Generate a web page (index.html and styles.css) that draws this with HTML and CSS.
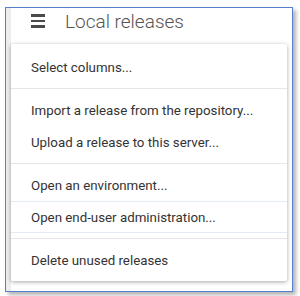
FILE: index.html
```html
<!DOCTYPE html>
<html>
<head>
<meta charset="utf-8">
<link rel="stylesheet" href="styles.css">
</head>
<body>
<div class="frame">
  <header class="header">
    <span class="burger"><span></span><span></span><span></span></span>
    <h1 class="title">Local releases</h1>
  </header>
  <div class="menu">
    <div class="group">
      <div class="item">Select columns...</div>
    </div>
    <div class="group">
      <div class="item">Import a release from the repository...</div>
      <div class="item">Upload a release to this server...</div>
    </div>
    <div class="group">
      <div class="item">Open an environment...</div>
      <div class="item focus">Open end-user administration...</div>
    </div>
    <div class="group">
      <div class="item">Delete unused releases</div>
    </div>
  </div>
</div>
</body>
</html>
```
FILE: styles.css
```css
html, body {
  margin: 0;
  padding: 0;
  background: #fff;
}
body {
  font-family: Roboto, "Liberation Sans", sans-serif;
  width: 300px;
  height: 296px;
  overflow: hidden;
}
.frame {
  box-sizing: border-box;
  margin: 7px 0 0 5px;
  width: 288px;
  height: 285px;
  border: 1px solid #5580d0;
  background: linear-gradient(to right, #ededed 5px, #fff 5px);
  box-shadow: 3px 3px 4px rgba(0, 0, 0, 0.3);
  display: flex;
  flex-direction: column;
}
.header {
  box-sizing: border-box;
  height: 36px;
  padding: 0 0 10px 25px;
  display: flex;
  align-items: center;
}
.burger {
  display: flex;
  flex-direction: column;
  gap: 3px;
  width: 14px;
}
.burger span {
  display: block;
  height: 2.6px;
  background: #4a4a4a;
}
.title {
  margin: 0 0 0 20px;
  font-size: 19px;
  font-weight: 300;
  color: #555;
}
.menu {
  margin-left: 5px;
  width: 276px;
  height: 237px;
  box-sizing: border-box;
  padding-top: 2px;
  background: #fff;
  border-radius: 2px;
  box-shadow: 0 1px 4px rgba(0, 0, 0, 0.35);
}
.group {
  padding: 5px 0;
}
.group + .group {
  border-top: 1px solid #e6e6e6;
}
.item {
  height: 32px;
  display: flex;
  align-items: center;
  padding-left: 20px;
  font-size: 13.3px;
  color: #333;
}
.item.focus {
  box-sizing: border-box;
  border-top: 1px solid #e4ebf5;
  border-bottom: 1px solid #e4ebf5;
}
```
